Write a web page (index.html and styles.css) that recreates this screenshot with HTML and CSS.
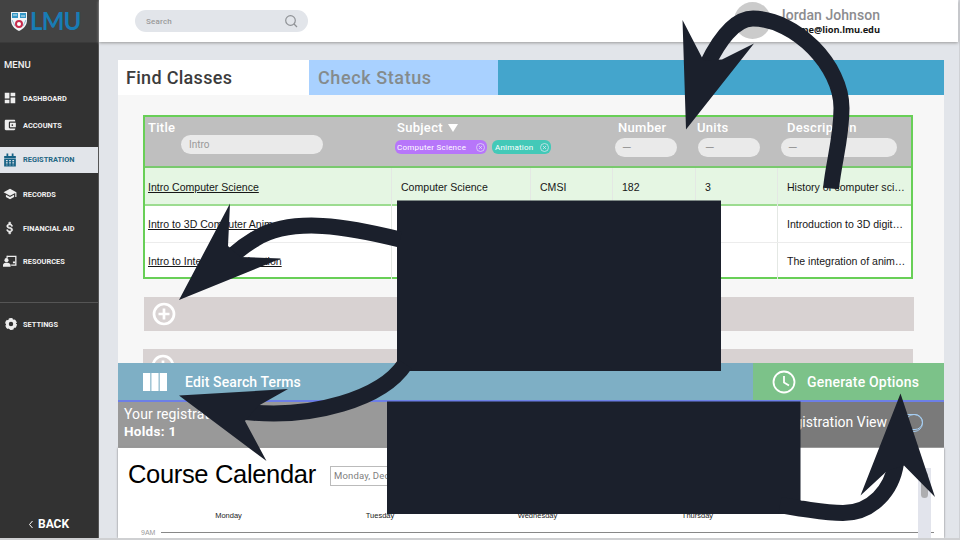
FILE: index.html
```
<!DOCTYPE html>
<html lang="en">
<head>
<meta charset="utf-8">
<title>Find Classes</title>
<link rel="stylesheet" href="styles.css">
</head>
<body>
<div class="app">
  <aside class="sidebar">
    <div class="brand">
      <svg class="crest" width="18" height="21" viewBox="0 0 18 21"><path d="M1 1H17V9C17 15 13 18 9 20C5 18 1 15 1 9Z" fill="#f2f5f7"/><path d="M2 2H8V7H2ZM10 2H16V7H10Z" fill="#3597c6"/><path d="M3 4H7M11 5H15" stroke="#d8ebf2"/><path d="M2 9L5 15M16 9L13 15" stroke="#91b8d0"/><circle cx="9" cy="13" r="3" fill="#fff" stroke="#c72c4d" stroke-width="2"/></svg>
      <span>LMU</span>
    </div>
    <div class="menu-title">MENU</div>
    <nav>
      <a class="nav dash"><svg viewBox="0 0 24 24"><path d="M3 13h8V3H3zm0 8h8v-6H3zm10 0h8V11h-8zm0-18v6h8V3z"/></svg><span>DASHBOARD</span></a>
      <a class="nav acct"><svg viewBox="0 0 24 24"><path d="M21 18v1c0 1-1 2-2 2H5c-1 0-2-1-2-2V5c0-1 1-2 2-2h14c1 0 2 1 2 2v1h-9a2 2 0 0 0-2 2v8c0 1 1 2 2 2zm-9-2h10V8H12zm4-2.500a1.500 1.500 0 1 1 0-3 1.500 1.500 0 0 1 0 3"/></svg><span>ACCOUNTS</span></a>
      <a class="nav reg active"><svg viewBox="0 0 24 24"><path d="M2 5h4V1h3v4h6V1h3v4h4v4H2zM2 10h20v13H2z"/><path d="M5 12h3v2H5zm5.500 0h3v2h-3zm5.500 0h3v2h-3zM5 16h3v2H5zm5.500 0h3v2h-3zm5.500 0h3v2h-3zM5 20h3v1H5zm5.500 0h3v1h-3zm5.500 0h3v1h-3z" fill="#e2e5ea"/></svg><span>REGISTRATION</span></a>
      <a class="nav rec"><svg viewBox="0 0 24 24"><path d="M5 13.200v4L12 21l7-3.800v-4L12 17zM12 3 1 9l11 6 9-4.900V17h2V9z"/></svg><span>RECORDS</span></a>
      <a class="nav fin"><svg viewBox="0 0 24 24"><path d="M11.800 10.900c-2.300-.6-3-1.200-3-2.100 0-1.100 1-1.900 2.700-1.900 1.800 0 2.500.9 2.500 2.100h2.300c-.1-1.700-1.100-3.300-3.300-3.800V2h-3v3.200C8 5.600 6.500 6.800 6.500 8.800c0 2.300 1.900 3.500 4.700 4.100 2.500.6 3 1.500 3 2.400 0 .7-.5 1.800-2.700 1.800-2.100 0-2.900-.9-3-2.100H6.300c.1 2.200 1.800 3.400 3.700 3.800V22h3v-3.200c2-.4 3.500-1.500 3.500-3.600 0-2.800-2.400-3.700-4.700-4.300" stroke="#eee"/></svg><span>FINANCIAL AID</span></a>
      <a class="nav res"><svg viewBox="0 0 24 24"><path d="M7 4h15v15h-8" fill="none" stroke="#eee" stroke-width="2.200"/><path d="M6 3h2v4H6zM0 22v-3c0-3 3-4 6-4s7 1 7 4v3zM17 13h4v3h-4z"/><circle cx="6" cy="10.500" r="3.500"/></svg><span>RESOURCES</span></a>
      <a class="nav set"><svg viewBox="0 0 24 24"><circle cx="12" cy="12" r="6.300" fill="none" stroke="#eee" stroke-width="5"/><circle cx="12" cy="12" r="9" fill="none" stroke="#eee" stroke-width="2.500" stroke-dasharray="6.400 3.020"/></svg><span>SETTINGS</span></a>
    </nav>
    <div class="back"><svg width="6" height="9" viewBox="0 0 6 9"><path d="M4.500 1 1.500 4.500l3 3.500" fill="none" stroke="#fff"/></svg><span>BACK</span></div>
  </aside>

  <div class="main">
    <header class="topbar">
      <div class="search"><span>Search</span><svg width="14" height="14" viewBox="0 0 14 14"><circle cx="6.500" cy="6.500" r="4.800"/><path d="m10 10 3 3"/></svg></div>
      <div class="user"><i class="avatar"></i><div class="who"><div class="name">Jordan Johnson</div><div class="mail">name@lion.lmu.edu</div></div></div>
    </header>

    <main class="page">
      <div class="tabs"><div class="tab on"><span>Find Classes</span></div><div class="tab off"><span>Check Status</span></div></div>
      <section class="results">
        <div class="table">
          <div class="thead">
            <div class="th t1"><b>Title</b><div class="pill">Intro</div></div>
            <div class="th t2"><b>Subject <svg width="10" height="8" viewBox="0 0 10 8"><path d="M0 0h10L5 8z" fill="#fff"/></svg></b>
              <div class="tags"><div class="tag violet"><span>Computer Science</span><svg viewBox="0 0 9 9"><circle cx="4.500" cy="4.500" r="4"/><path d="m3 3 3 3m0-3-3 3"/></svg></div><div class="tag teal"><span>Animation</span><svg viewBox="0 0 9 9"><circle cx="4.500" cy="4.500" r="4"/><path d="m3 3 3 3m0-3-3 3"/></svg></div></div></div>
            <div class="th t3"><b>Number</b><div class="pill dash-pill">—</div></div>
            <div class="th t4"><b>Units</b><div class="pill dash-pill">—</div></div>
            <div class="th t5"><b>Description</b><div class="pill dash-pill">—</div></div>
          </div>
          <div class="row hit"><div><u>Intro Computer Science</u></div><div>Computer Science</div><div>CMSI</div><div>182</div><div>3</div><div>History of computer sci…</div></div>
          <div class="row"><div><u>Intro to 3D Computer Anim…</u></div><div></div><div></div><div></div><div></div><div>Introduction to 3D digit…</div></div>
          <div class="row"><div><u>Intro to Interactive Animation</u></div><div></div><div></div><div></div><div></div><div>The integration of anim…</div></div>
        </div>
        <div class="add"><svg width="24" height="24" viewBox="0 0 24 24"><circle cx="12" cy="12" r="10"/><path d="M12 6.500v11M6.500 12h11"/></svg></div>
        <div class="add second"><svg width="24" height="24" viewBox="0 0 24 24"><circle cx="12" cy="12" r="10"/><path d="M12 6.500v11M6.500 12h11"/></svg></div>
      </section>
      <div class="actions">
        <div class="edit"><svg width="24" height="18" viewBox="0 0 24 18"><path d="M0 0h7.300v18H0zM8.400 0h7.200v18H8.400zM16.700 0H24v18h-7.300z" fill="#fff"/></svg><span>Edit Search Terms</span></div>
        <div class="gen"><svg width="24" height="24" viewBox="0 0 24 24"><circle cx="12" cy="12" r="10.500"/><path d="M12 6v6.500l5 3"/></svg><span>Generate Options</span></div>
      </div>
      <div class="status">
        <div class="hold"><div class="regline">Your registration</div><div class="holds">Holds: 1</div></div>
        <div class="view"><span>Registration View</span><i class="toggle"></i></div>
      </div>
      <section class="calendar">
        <div class="calbody">
          <div class="calhead"><h1>Course Calendar</h1><div class="date">Monday, Dec</div></div>
          <div class="days"><span>Monday</span><span>Tuesday</span><span>Wednesday</span><span>Thursday</span></div>
          <div class="hour"><span>9AM</span><hr></div>
        </div>
        <div class="scroll"><i></i></div>
      </section>
    </main>
  </div>

  <svg class="notes" width="960" height="540" viewBox="0 0 960 540">
    <path d="M397 200.500H721V371H397ZM387 401.500H800.500V514H387Z"/>
    <path class="stroke" d="M831 188.500C834 160 841.500 138 841.500 108C841.500 66 796 19 753 18.500C734 18.500 718 42 707 65"/>
    <path d="M682.500 20 703.500 60.500 722 59.500 754 43.500 686 129.500Z"/>
    <path class="stroke" d="M400 239.500C350 227 292 216 255 239Q243 246 232 256"/>
    <path d="M230 203.500 228 246 240.500 257 281 258.500 179 300Z"/>
    <path class="stroke" d="M405 364C382 399 312 419 246 412"/>
    <path d="M179 395.500 288 389 258 406 245 421 266.500 461Z"/>
    <path class="stroke" d="M780 505L800 508.500C818 511 828 513 843 513C872 513 892 490 896 463"/>
    <path d="M900.500 393.500 935 497 904 465.500 887 471 860.500 495.500Z"/>
  </svg>
</div>
</body>
</html>
```
FILE: styles.css
```
* { box-sizing: border-box; }
body { margin: 0; font-family: Roboto, "Liberation Sans", sans-serif; overflow: hidden; }
.app { position: relative; display: flex; width: 960px; height: 540px; background: #e2e5ea; overflow: hidden; border-bottom: 2px solid #cfd0d2; }
.sidebar { width: 99px; flex: none; background: #323232; color: #f1f1f1; display: flex; flex-direction: column; border-right: 1px solid #555; }
.brand { height: 43px; flex: none; background: #434343; display: flex; align-items: center; padding-left: 10px; border-bottom: 1px solid #3a3a3a; }
.brand span { font: 700 24px/42px Lato, sans-serif; color: #187cb5; letter-spacing: -.8px; margin-left: 2px; }
.menu-title { font-size: 9.500px; line-height: 12px; font-weight: 500; margin: 16px 0 0 4px; }
nav { display: flex; flex-direction: column; margin-top: 14px; }
.nav { display: flex; align-items: center; height: 26px; padding-left: 3px; font-size: 7.400px; font-weight: 700; }
.nav svg { width: 14px; height: 14px; fill: #eee; flex: none; }
.nav span { margin-left: 6px; white-space: nowrap; }
.acct { margin-top: 1px; }
.nav.reg { margin-top: 9px; padding-bottom: 1px; }
.active { background: #e2e5ea; color: #236683; }
.nav.active svg { fill: #176284; }
.rec { margin-top: 8px; }
.fin { margin-top: 8px; }
.res { margin-top: 7px; }
.set { margin-top: 28px; border-top: 1px solid #555; height: 43px; }
.set svg { margin-left: 1px; }
.set span { margin-left: 5px; }
.back { margin: auto 0 6px 28px; display: flex; align-items: center; gap: 4px; font-size: 12px; line-height: 15px; font-weight: 700; color: #fff; }

.main { flex: 1; min-width: 0; border-right: 1px solid #cfd1d5; }
.topbar { height: 42px; background: #fff; box-shadow: 0 1px 3px #999; display: flex; justify-content: space-between; padding-left: 36px; padding-right: 78px; margin-right: 1px; }
.search { display: flex; align-items: center; justify-content: space-between; width: 173px; height: 22px; margin-top: 10px; border-radius: 11px; background: #e2e5ea; padding: 0 10px 0 11px; color: #999; font-size: 8px; font-weight: 500; letter-spacing: .2px; }
.search svg { fill: none; stroke: #8f9296; stroke-width: 1.200; }
.user { display: flex; }
.avatar { width: 37px; height: 37px; border-radius: 50%; background: #cbcbcb; margin-top: 2px; }
.who { width: 100px; margin-left: 9px; display: flex; flex-direction: column; align-items: flex-end; white-space: nowrap; padding-top: 7px; }
.name { font: 500 14px/17px Roboto, sans-serif; color: #8c8c8f; letter-spacing: .05px; }
.mail { font: 700 9.300px/12px "Open Sans", sans-serif; color: #151515; letter-spacing: -.05px; }

.page { width: 826px; margin: 18px 0 0 19px; }
.tabs { height: 35px; display: flex; background: #44a5cc; }
.tab { font-size: 18px; font-weight: 500; line-height: 36px; padding-left: 8px; white-space: nowrap; letter-spacing: .3px; }
.tab.on { width: 191px; background: #fff; color: #3c3c3c; }
.tab.off { width: 189px; background: #a9d1ff; color: #858b8c; padding-left: 9px; letter-spacing: .6px; }
.results { height: 268px; overflow: hidden; background: #f7f7f7; padding: 20px 30px 0 25px; }
.table { width: 770px; height: 164px; border: 2px solid #68cf57; background: #fff; }
.thead { height: 49px; background: #bfbfbf; display: grid; grid-template-columns: 248px 221px 79px 90px 128px; }
.th { padding-left: 3px; color: #fff; }
.th b { display: block; font-size: 13px; line-height: 16px; font-weight: 500; padding-top: 3px; letter-spacing: .3px; }
.th .pill { height: 19px; border-radius: 10px; background: #eaeaea; color: #999; font-size: 10px; line-height: 19px; padding-left: 8px; margin-top: 1.500px; }
.th .dash-pill { font-size: 12px; padding-left: 7px; line-height: 21px; }
.th.t1 .pill { width: 142px; margin: -1px 0 0 33px; }
.t2 { padding-left: 4px; }
.t2 b svg { display: inline; margin-left: 2px; }
.t3 { padding-left: 4px; }
.t3 .pill { width: 62px; margin-left: -3px; }
.t4 .pill { width: 62px; margin-left: 1px; }
.t5 .pill { width: 116px; margin-left: -6px; }
.t4 { padding-left: 4px; }
.t5 { padding-left: 4px; }
.tags { display: flex; gap: 5px; margin: 4px 0 0 -2px; }
.tag { height: 14px; border-radius: 6px; display: flex; align-items: center; justify-content: space-between; padding: 0 2px 0 2px; font-size: 8px; font-weight: 400; white-space: nowrap; }
.tag svg { width: 9px; height: 9px; fill: none; stroke: #e5eaf5; stroke-width: .7; }
.violet { width: 92px; background: #b776fa; letter-spacing: .25px; }
.teal { width: 59px; background: #43c9b8; letter-spacing: .2px; padding-left: 3px; }
.row { height: 37px; display: grid; grid-template-columns: 247px 139px 82px 83px 82px 133px; font: 10.550px/36px "Liberation Sans", sans-serif; color: #171717; border-bottom: 1px solid #ececec; }
.row > div { padding-left: 9px; border-right: 1px solid #e4e8e4; white-space: nowrap; }
.row > div:first-child { padding-left: 3px; }
.row > div:last-child { border: 0; }
.row u { text-underline-offset: 1px; }
.row.hit { height: 40px; line-height: 38px; background: #e5f6e3; border-top: 2px solid #79c96e; border-bottom: 2px solid #9cdc90; }
.row:last-child { border: 0; height: 34px; }
.add { width: 770px; height: 34px; background: #d8d2d2; margin: 18px 0 0 1px; padding: 5px 0 0 8px; }
.add svg { fill: none; stroke: #fff; stroke-width: 2.700; display: block; }
.second { margin-left: 0; width: 770px; padding-top: 5px; }
.actions { height: 39px; display: flex; background: #7eafc5; color: #fff; border-bottom: 2px solid #6d7fe6; font-size: 14px; font-weight: 500; letter-spacing: .13px; }
.edit { width: 635px; display: flex; align-items: center; padding-left: 25px; gap: 18px; }
.gen { flex: 1; display: flex; align-items: center; background: #7cc289; padding-left: 19px; gap: 11px; letter-spacing: .2px; }
.gen svg { fill: none; stroke: #fff; stroke-width: 1.800; }
.status { height: 46px; display: flex; justify-content: space-between; color: #fff; background: linear-gradient(90deg, #999 0 40%, #7a7a7a 70%); border-bottom: 1px solid #aaa; }
.hold { padding: 4px 0 0 6px; font-size: 14px; line-height: 17px; white-space: nowrap; }
.regline { letter-spacing: .1px; }
.holds { font-weight: 700; font-size: 13.500px; letter-spacing: .3px; }
.view { display: flex; align-items: center; padding: 0 21px 5px 0; gap: 8px; font-size: 14px; }
.toggle { width: 28px; height: 16px; position: relative; border: 1px solid #a6cef2; border-radius: 8px; }
.toggle::after { content: ""; position: absolute; right: -1px; top: -1px; width: 16px; height: 16px; border: 1.500px solid #a6cef2; border-radius: 50%; }
.calendar { height: 90px; background: #fff; display: flex; box-shadow: 0 0 2px #777; }
.calbody { width: 800px; }
.calhead { display: flex; height: 55px; padding: 0 0 0 10px; }
h1 { margin: 9px 0 0; font: 400 25.500px/34px "Liberation Sans", sans-serif; letter-spacing: -.33px; color: #000; width: 202px; white-space: nowrap; }
.date { width: 130px; height: 20px; margin-top: 18px; border: 1px solid #bbb; padding-left: 3px; font: 9.500px/17px Roboto, sans-serif; color: #808080; letter-spacing: .15px; }
.days { display: grid; grid-template-columns: 151px 152px 163px 157px; padding-left: 35px; height: 23px; font: 7.500px/26px "Liberation Sans", sans-serif; color: #222; text-align: center; }
.hour { display: flex; align-items: center; padding-left: 23px; gap: 6px; height: 13px; font: 7px "Liberation Sans", sans-serif; color: #999; }
.hour hr { width: 773px; flex: none; margin: 0; border: 0; border-top: 1px solid #888; }
.scroll { width: 13px; background: #e2e4ec; padding: 4px 3px; margin-top: 20px; }
.scroll i { display: block; width: 7px; height: 26px; border-radius: 4px; background: #adadb0; }
.notes { position: absolute; left: 0; top: 0; fill: #1b202c; }
.notes .stroke { fill: none; stroke: #1b202c; stroke-width: 16; }
```
